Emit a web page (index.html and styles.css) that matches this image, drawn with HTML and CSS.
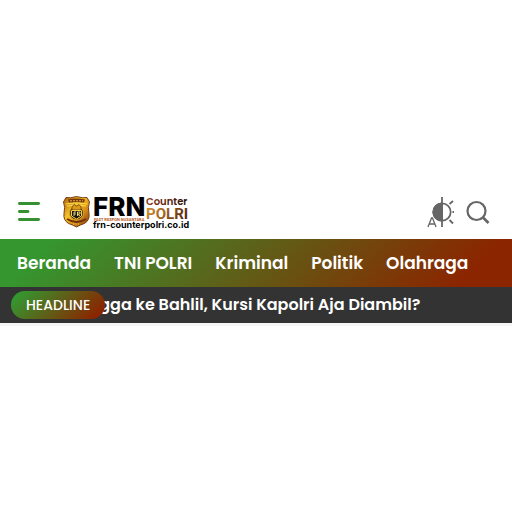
FILE: index.html
```
<!DOCTYPE html>
<html lang="id">
<head>
<meta charset="utf-8">
<meta name="viewport" content="width=device-width, initial-scale=1">
<title>FRN Counter Polri</title>
<link rel="stylesheet" href="styles.css">
</head>
<body>
<header class="site-header">
  <div class="topbar">
    <button class="icon-button menu" type="button" aria-label="Menu">
      <svg width="22" height="20" viewBox="0 0 22 20" fill="none" stroke="#35912f" stroke-width="2.800" stroke-linecap="round"><path d="M1.400 1.500H20.600M1.400 9.500H10M1.400 17.500H20.600"/></svg>
    </button>
    <a class="logo" href="#" aria-label="FRN Counter Polri">
      <svg width="128" height="36" viewBox="0 0 128 36">
        <defs>
          <linearGradient id="gold" x1="0" y1="0" x2="1" y2="1"><stop offset="0" stop-color="#a85c0c"/><stop offset=".4" stop-color="#f5c326"/><stop offset=".65" stop-color="#d58b15"/><stop offset="1" stop-color="#71300b"/></linearGradient>
          <linearGradient id="bronze" x1="0" y1="0" x2="1" y2=".3"><stop offset="0" stop-color="#d99732"/><stop offset=".5" stop-color="#a4651b"/><stop offset="1" stop-color="#5c2c0a"/></linearGradient>
          <linearGradient id="rust" x1="0" y1="0" x2="1" y2="0"><stop offset="0" stop-color="#8a3210"/><stop offset="1" stop-color="#2c1205"/></linearGradient>
        </defs>
        <g transform="translate(0 1)">
          <path d="M4 2.500Q8 3.500 14.500 1.500Q21 3.500 25 2.500L27.500 7Q25.500 12 27 18.500Q28 25 22.500 28.500Q17.500 30 14.500 32Q11.500 30 6.500 28.500Q1 25 2 18.500Q3.500 12 1.500 7Z" fill="url(#gold)" stroke="#7b3c11"/>
          <path d="M6 4.500Q14.500 2.500 23 4.500L22 7.500H7Z" fill="#74380b"/>
          <path d="M8 5.800H21" stroke="#eab13c" stroke-dasharray="2 1"/>
          <path d="M3.500 9Q14.500 6.500 25.500 9M5 11Q14.500 8.500 24 11" fill="none" stroke="#ffda4b"/>
          <circle cx="14.500" cy="18" r="7" fill="#4b2f12" stroke="#dba127"/>
          <path d="M10 12L12 9.500L14.500 11L17 9.500L19 12V15H10Z" fill="#d99a1c" stroke="#5a370d" stroke-width=".7"/>
          <path d="M9.500 15.500H19.500V21L14.500 24L9.500 21Z" fill="#151512" stroke="#f4ce41"/>
          <path d="M12 21V17H14M12 19H14M15.500 21V17H18V19H15.500L18 21" fill="none" stroke="#ffe278" stroke-width=".9"/>
          <path d="M5 24Q14.500 30 24 24" fill="none" stroke="#702f0c" stroke-width="2"/>
          <path d="M11 29H18" stroke="#f5cc53" stroke-dasharray="1 1.500"/>
        </g>
        <text class="logo-main" x="31" y="22">FRN</text>
        <text class="logo-small" x="32" y="27">FAST RESPON NUSANTARA</text>
        <text class="logo-counter" x="84" y="11" fill="url(#rust)">Counter</text>
        <text class="logo-polri" x="84" y="25" fill="url(#bronze)">POLRI</text>
        <text class="logo-url" x="31" y="34">frn-counterpolri.co.id</text>
      </svg>
    </a>
    <div class="tools">
      <button class="icon-button" type="button" aria-label="Mode gelap">
        <svg width="28" height="32" viewBox="0 0 28 32" fill="none" stroke="#666" stroke-width="1.800"><circle cx="15" cy="16" r="8.700"/><path d="M15 7.300A8.700 8.700 0 0 0 15 24.700Z" fill="#666"/><path d="M15 1V31M22.500 8L26 5M25.500 16H27M22.500 24L26 27.500"/><path d="M1 31L4.500 22H5.500L9 31M2.500 28H7.500" stroke-width="1.300"/></svg>
      </button>
      <button class="icon-button" type="button" aria-label="Cari">
        <svg width="24" height="24" viewBox="0 0 24 24" fill="none" stroke="#666" stroke-width="2.200"><circle cx="10.500" cy="11" r="9"/><path d="M17 17.500L22.500 23" stroke-width="2.600"/></svg>
      </button>
    </div>
  </div>
  <nav class="main-nav">
    <a href="#">Beranda</a>
    <a href="#">TNI POLRI</a>
    <a href="#">Kriminal</a>
    <a href="#">Politik</a>
    <a href="#">Olahraga</a>
  </nav>
  <div class="headline">
    <span class="headline-label">HEADLINE</span>
    <a class="headline-text" href="#">gga ke Bahlil, Kursi Kapolri Aja Diambil?</a>
  </div>
</header>
</body>
</html>
```
FILE: styles.css
```
* { box-sizing: border-box; }
body {
  margin: 0;
  padding-top: 185px;
  background: #fff;
  font-family: Poppins, Inter, "Open Sans", sans-serif;
}
a { color: inherit; text-decoration: none; }
svg { display: block; }
.site-header { border-bottom: 3px solid #f5f5f5; }
.topbar {
  display: flex;
  align-items: center;
  height: 54px;
  padding: 0 22px 0 18px;
}
.icon-button {
  padding: 0;
  border: 0;
  background: none;
  cursor: pointer;
}
.logo { margin-left: 22px; }
.logo svg { overflow: visible; }
.tools {
  display: flex;
  align-items: center;
  gap: 11px;
  margin-left: auto;
}
.logo text { font-family: Inter, sans-serif; font-weight: 700; }
.logo .logo-main { font-size: 26px; font-weight: 800; }
.logo .logo-small { font-family: Roboto, sans-serif; font-size: 4px; fill: #b75a20; }
.logo .logo-counter { font-family: Poppins, sans-serif; font-weight: 600; font-size: 10px; }
.logo .logo-polri { font-family: Roboto, sans-serif; font-size: 15px; }
.logo .logo-url { font-size: 9px; }
.main-nav {
  display: flex;
  align-items: center;
  gap: 23px;
  height: 48px;
  padding: 0 17px;
  overflow: hidden;
  background: linear-gradient(135deg, #35952e 10%, #8b2500 90%);
  color: #fff;
  font-size: 17px;
  font-weight: 600;
  white-space: nowrap;
}
.headline {
  display: flex;
  align-items: center;
  height: 36px;
  padding: 0 11px;
  overflow: hidden;
  background: #333;
  color: #fff;
  font-size: 16px;
  font-weight: 600;
  line-height: 22px;
  white-space: nowrap;
}
.headline-label {
  position: relative;
  z-index: 1;
  padding: 0 15px;
  border-radius: 14px;
  background: linear-gradient(135deg, #35952e 10%, #8b2500 90%);
  font-size: 14px;
  font-weight: 500;
  line-height: 28px;
}
.headline-text { margin-left: -6px; }
```
